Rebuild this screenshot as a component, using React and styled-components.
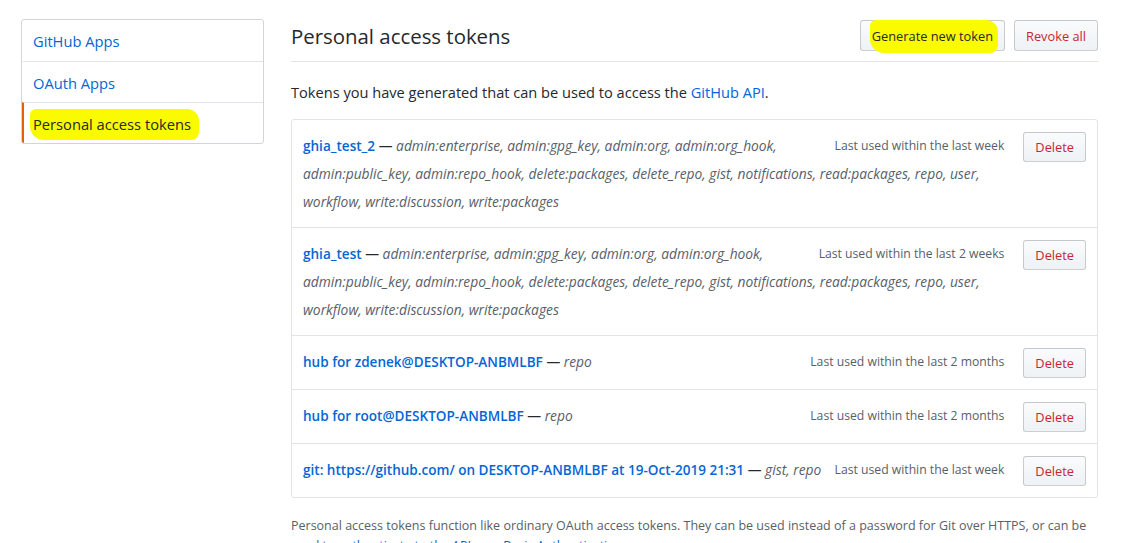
import React from "react";
import styled, { createGlobalStyle } from "styled-components";

const GlobalStyle = createGlobalStyle`
  body {
    margin: 0;
    background: #fff;
    font-family: "Open Sans", "Noto Sans", sans-serif;
    color: #24292e;
  }
`;

const Page = styled.div`
  display: flex;
  align-items: flex-start;
  gap: 27px;
  padding: 19px 0 0 21px;
  width: 1077px;
  height: 524px;
  overflow: hidden;
`;

const Menu = styled.nav`
  width: 241px;
  flex-shrink: 0;
  border: 1px solid #d1d5da;
  border-radius: 3px;
  overflow: hidden;
`;

const MenuItem = styled.a`
  display: block;
  height: 41px;
  box-sizing: border-box;
  padding: 0 9px;
  line-height: 42px;
  font-size: 14.7px;
  color: ${(p) => (p.$selected ? "#24292e" : "#0366d6")};
  border-left: 2px solid ${(p) => (p.$selected ? "#e36209" : "transparent")};
  & + & {
    border-top: 1px solid #e1e4e8;
  }
`;

const Marker = styled.span`
  background: #fbfb00;
  border-radius: 6px 12px 8px 14px;
  padding: ${(p) => p.$pad || "5px 8px 6px 3px"};
  margin: ${(p) => p.$margin || "0 -8px 0 -3px"};
`;

const Main = styled.main`
  flex: 1;
  min-width: 0;
`;

const Header = styled.div`
  display: flex;
  align-items: flex-start;
  gap: 9px;
  height: 41px;
  padding-top: 1px;
  border-bottom: 1px solid #e1e4e8;
`;

const Title = styled.h2`
  flex: 1;
  margin: -1px 0 0;
  font-size: 20.4px;
  font-weight: 400;
  line-height: 34px;
`;

const Button = styled.button`
  height: 31px;
  padding: 0 11px;
  font-family: inherit;
  font-size: 12.8px;
  color: ${(p) => (p.$danger ? "#cb2431" : "#24292e")};
  background: linear-gradient(#fafbfc, #eff3f6 90%);
  border: 1px solid rgba(27, 31, 35, 0.2);
  border-radius: 3px;
  cursor: pointer;
`;

const Intro = styled.p`
  margin: 19px 0 16px;
  font-size: 14.6px;
  line-height: 22px;
`;

const Link = styled.a`
  color: #0366d6;
  text-decoration: none;
`;

const TokenName = styled(Link)`
  font-weight: 600;
  font-size: 13.55px;
`;

const List = styled.div`
  border: 1px solid #e1e4e8;
  border-radius: 3px;
`;

const Row = styled.div`
  padding: 12px 11px 11px 11px;
  font-size: 13.8px;
  line-height: 28px;
  & + & {
    border-top: 1px solid #e1e4e8;
  }
  &::after {
    content: "";
    display: block;
    clear: both;
  }
`;

const DeleteButton = styled(Button)`
  float: right;
  height: 30px;
  padding: 0 11px;
  margin-left: 19px;
`;

const LastUsed = styled.span`
  float: right;
  margin-left: 8px;
  color: #586069;
  font-size: 12.2px;
`;

const Scopes = styled.em`
  color: #586069;
`;

const Note = styled.p`
  margin: 18px 0 0;
  font-size: 12.5px;
  line-height: 20px;
  color: #586069;
`;

const tokens = [
  {
    name: "ghia_test_2",
    scopes:
      "admin:enterprise, admin:gpg_key, admin:org, admin:org_hook, admin:public_key, admin:repo_hook, delete:packages, delete_repo, gist, notifications, read:packages, repo, user, workflow, write:discussion, write:packages",
    used: "Last used within the last week",
  },
  {
    name: "ghia_test",
    scopes:
      "admin:enterprise, admin:gpg_key, admin:org, admin:org_hook, admin:public_key, admin:repo_hook, delete:packages, delete_repo, gist, notifications, read:packages, repo, user, workflow, write:discussion, write:packages",
    used: "Last used within the last 2 weeks",
  },
  {
    name: "hub for zdenek@DESKTOP-ANBMLBF",
    scopes: "repo",
    used: "Last used within the last 2 months",
  },
  {
    name: "hub for root@DESKTOP-ANBMLBF",
    scopes: "repo",
    used: "Last used within the last 2 months",
  },
  {
    name: "git: https://github.com/ on DESKTOP-ANBMLBF at 19-Oct-2019 21:31",
    scopes: "gist, repo",
    used: "Last used within the last week",
  },
];

export default function App() {
  return (
    <>
      <GlobalStyle />
      <Page>
        <Menu>
          <MenuItem>GitHub Apps</MenuItem>
          <MenuItem>OAuth Apps</MenuItem>
          <MenuItem $selected>
            <Marker>Personal access tokens</Marker>
          </MenuItem>
        </Menu>
        <Main>
          <Header>
            <Title>Personal access tokens</Title>
            <Button>
              <Marker $pad="7px 5px 8px 2px" $margin="0 -5px 0 -2px">
                Generate new token
              </Marker>
            </Button>
            <Button $danger>Revoke all</Button>
          </Header>
          <Intro>
            Tokens you have generated that can be used to access the{" "}
            <Link>GitHub API</Link>.
          </Intro>
          <List>
            {tokens.map((t) => (
              <Row key={t.name}>
                <DeleteButton $danger>Delete</DeleteButton>
                <LastUsed>{t.used}</LastUsed>
                <TokenName>{t.name}</TokenName> — <Scopes>{t.scopes}</Scopes>
              </Row>
            ))}
          </List>
          <Note>
            Personal access tokens function like ordinary OAuth access tokens.
            They can be used instead of a password for Git over HTTPS, or can be
            used to <Link>authenticate to the API over Basic Authentication</Link>.
          </Note>
        </Main>
      </Page>
    </>
  );
}
